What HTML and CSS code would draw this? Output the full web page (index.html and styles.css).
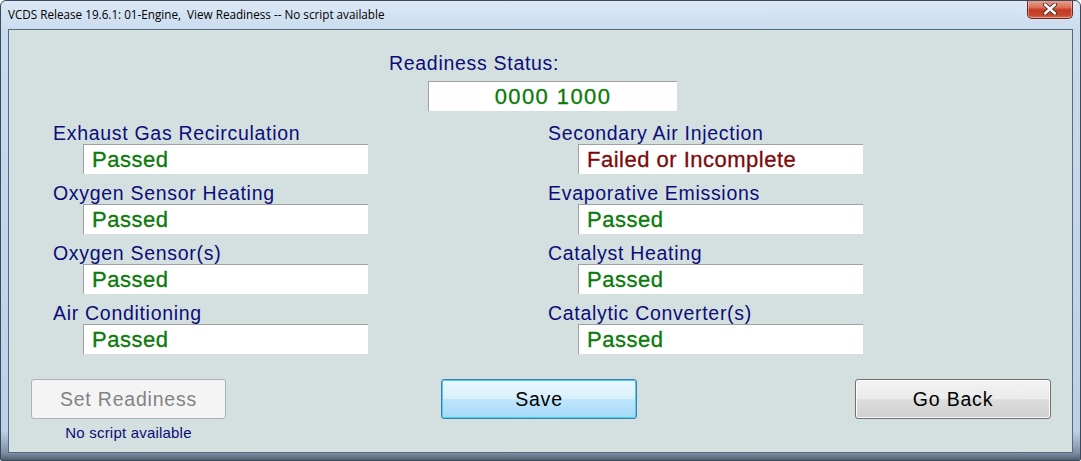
FILE: index.html
```html
<!DOCTYPE html>
<html lang="en">
<head>
    <meta charset="UTF-8">
    <title>VCDS Release 19.6.1: 01-Engine, View Readiness</title>
    <link rel="stylesheet" href="styles.css">
</head>
<body>
    <div class="window">
        <!-- Заголовок окна -->
        <div class="titlebar">
            <span class="title">VCDS Release 19.6.1: 01-Engine,&nbsp; View Readiness -- No script available</span>
            <div class="close-btn">
                <svg width="20" height="12" viewBox="0 0 20 12">
                    <path d="M5 1.5 L15 10.5 M15 1.5 L5 10.5" stroke="#3d2a26" stroke-width="4.2" stroke-linecap="round"/>
                    <path d="M5 1.5 L15 10.5 M15 1.5 L5 10.5" stroke="#ffffff" stroke-width="2.4" stroke-linecap="round"/>
                </svg>
            </div>
        </div>

        <!-- Клиентская область -->
        <div class="client">
            <div class="status-label">Readiness Status:</div>
            <div class="status-box">0000 1000</div>

            <div class="grid">
                <div class="item">
                    <div class="label">Exhaust Gas Recirculation</div>
                    <div class="value passed">Passed</div>
                </div>
                <div class="item">
                    <div class="label">Secondary Air Injection</div>
                    <div class="value failed">Failed or Incomplete</div>
                </div>
                <div class="item">
                    <div class="label">Oxygen Sensor Heating</div>
                    <div class="value passed">Passed</div>
                </div>
                <div class="item">
                    <div class="label">Evaporative Emissions</div>
                    <div class="value passed">Passed</div>
                </div>
                <div class="item">
                    <div class="label">Oxygen Sensor(s)</div>
                    <div class="value passed">Passed</div>
                </div>
                <div class="item">
                    <div class="label">Catalyst Heating</div>
                    <div class="value passed">Passed</div>
                </div>
                <div class="item">
                    <div class="label">Air Conditioning</div>
                    <div class="value passed">Passed</div>
                </div>
                <div class="item">
                    <div class="label">Catalytic Converter(s)</div>
                    <div class="value passed">Passed</div>
                </div>
            </div>

            <div class="buttons">
                <div class="btn-group">
                    <button class="btn disabled" disabled>Set Readiness</button>
                    <div class="note">No script available</div>
                </div>
                <button class="btn default save">Save</button>
                <button class="btn back">Go Back</button>
            </div>
        </div>
    </div>
</body>
</html>
```

FILE: styles.css
```css
body {
    margin: 0;
    background: #ffffff;
}
.window {
    width: 1081px;
    height: 461px;
    box-sizing: border-box;
    border: 1px solid #3c4b5c;
    border-radius: 6px 6px 2px 2px;
    background: linear-gradient(to bottom, #dce9f6 0px, #c9dbee 30px, #bcd1e8 430px, #7d8fa3 452px, #4a5969 460px);
    display: flex;
    flex-direction: column;
    overflow: hidden;
}
.titlebar {
    height: 28px;
    display: flex;
    align-items: flex-start;
    justify-content: space-between;
}
.title {
    font-family: "Open Sans", "DejaVu Sans", sans-serif;
    font-size: 11.7px;
    color: #000000;
    margin: 5px 0 0 7px;
}
.close-btn {
    width: 46px;
    height: 19px;
    margin: -1px 7px 0 0;
    box-sizing: border-box;
    border: 1px solid #6e2a1f;
    border-top: none;
    border-radius: 0 0 5px 5px;
    background: linear-gradient(to bottom, #eaa493 0%, #dc725a 40%, #c23b22 55%, #c8462d 85%, #da7559 100%);
    box-shadow: inset 0 0 0 1px rgba(255, 255, 255, 0.35);
    display: flex;
    align-items: center;
    justify-content: center;
}
.client {
    flex: 1;
    margin: 0 7px 7px 7px;
    border: 1px solid #566a7c;
    background: #d3e0df;
    padding-top: 22px;
    font-family: "Liberation Sans", Arial, sans-serif;
}
.status-label {
    margin-left: 380px;
    font-size: 19.5px;
    line-height: 22px;
    letter-spacing: 0.7px;
    color: #0c0c7a;
}
.status-box {
    margin: 7px 0 0 419px;
    width: 249px;
    height: 30px;
    box-sizing: border-box;
    background: #ffffff;
    border-top: 1px solid #a0a0a0;
    border-left: 1px solid #a0a0a0;
    text-align: center;
    font-size: 22px;
    line-height: 29px;
    letter-spacing: 1.4px;
    color: #0a7a0a;
    -webkit-text-stroke: 0.3px #0a7a0a;
}
.grid {
    display: grid;
    grid-template-columns: 495px 495px;
    row-gap: 8px;
    padding-left: 44px;
    margin-top: 11px;
}
.label {
    font-size: 19.5px;
    line-height: 22px;
    letter-spacing: 0.7px;
    color: #0c0c7a;
    white-space: nowrap;
}
.value {
    margin-left: 30px;
    width: 285px;
    height: 30px;
    box-sizing: border-box;
    background: #ffffff;
    border-top: 1px solid #a0a0a0;
    border-left: 1px solid #a0a0a0;
    padding-left: 8px;
    font-size: 22px;
    line-height: 29px;
    letter-spacing: 0.5px;
    white-space: nowrap;
}
.passed {
    color: #0a7a0a;
    -webkit-text-stroke: 0.3px #0a7a0a;
}
.failed {
    color: #7d0a0a;
    -webkit-text-stroke: 0.3px #7d0a0a;
}
.buttons {
    display: flex;
    align-items: flex-start;
    padding: 0 21px 0 22px;
    margin-top: 25px;
}
.btn-group {
    display: flex;
    flex-direction: column;
    align-items: center;
}
.btn {
    width: 196px;
    height: 40px;
    border: 1px solid #707070;
    border-radius: 3px;
    background: linear-gradient(to bottom, #f2f2f2 0%, #ebebeb 50%, #dddddd 51%, #cfcfcf 100%);
    box-shadow: inset 0 0 0 1px #fcfcfc;
    font-family: "Liberation Sans", Arial, sans-serif;
    font-size: 19.5px;
    letter-spacing: 0.8px;
    color: #000000;
    padding: 0;
}
.btn.save {
    margin-left: 215px;
}
.btn.back {
    margin-left: auto;
}
.btn.default {
    border-color: #3c7fb1;
    background: linear-gradient(to bottom, #eaf6fd 0%, #d9f0fc 50%, #bee6fd 51%, #a7d9f5 100%);
    box-shadow: inset 0 0 0 1px #48d0f4;
}
.btn.disabled {
    width: 195px;
    border-color: #adb2b5;
    background: #f4f4f4;
    box-shadow: none;
    color: #838383;
}
.note {
    margin-top: 5px;
    font-size: 15px;
    line-height: 18px;
    letter-spacing: 0.2px;
    color: #0c0c7a;
}
```
